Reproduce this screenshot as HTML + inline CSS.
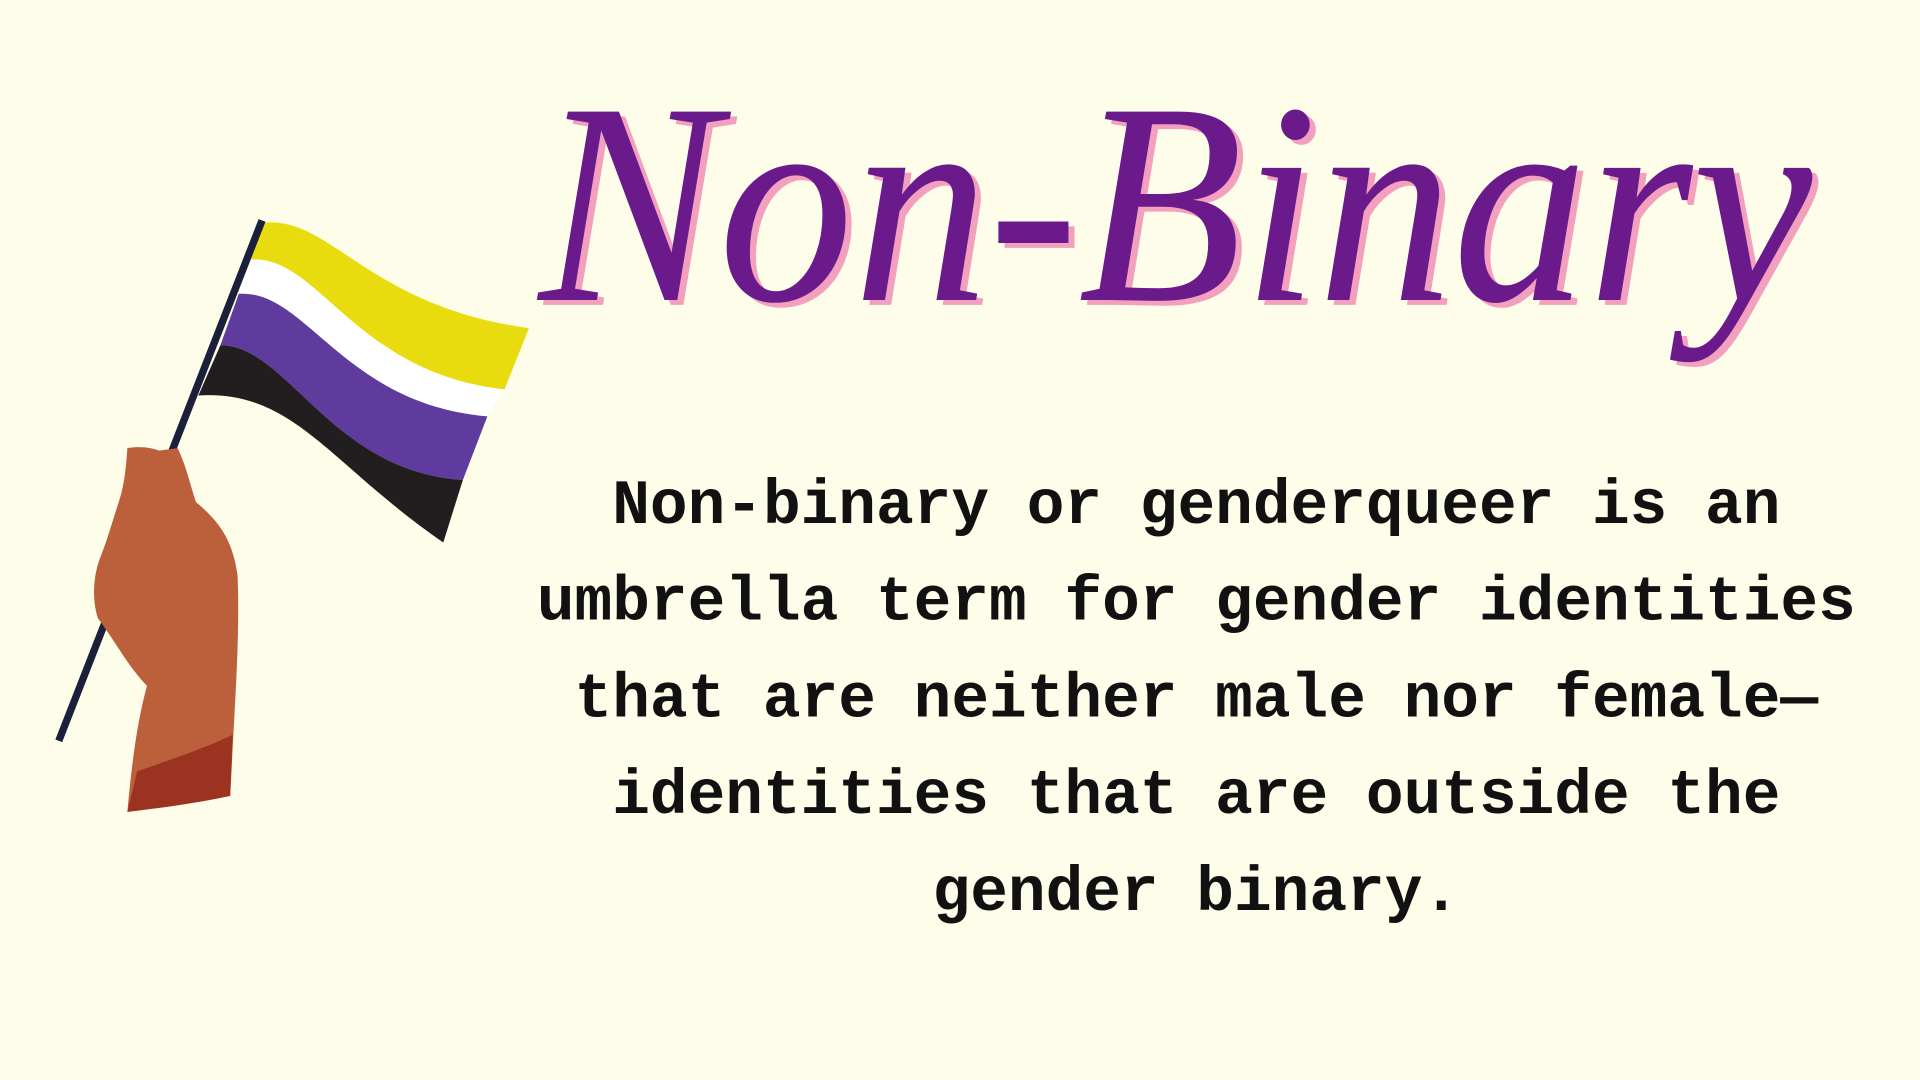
<!DOCTYPE html>
<html><head><meta charset="utf-8"><style>
html,body{margin:0;padding:0;background:#fdfde9;width:1920px;height:1080px;overflow:hidden}
svg{display:block}
</style></head><body>
<svg width="1920" height="1080" viewBox="0 0 1568 882" xmlns="http://www.w3.org/2000/svg">
<rect width="1568" height="882" fill="#fdfde9"/>
<path d="M215,182 C270,176 300,250 432,268 L412,318 C290,305 260,208 205,212 Z" fill="#e9dc0e"/>
<path d="M205,212 C260,208 290,305 412,318 L398,340 C280,330 250,236 195,240 Z" fill="#ffffff"/>
<path d="M195,240 C250,236 280,330 398,340 L378,392 C270,385 235,282 180,282 Z" fill="#5e3b9c"/>
<path d="M180,282 C235,282 270,385 378,392 L362,443 C270,380 240,318 162,323 Z" fill="#221e1f"/>
<line x1="214" y1="180" x2="48" y2="605" stroke="#1a1f3a" stroke-width="6"/>
<path d="M104,366 C115,364 125,366 130,368 L145,366 C152,380 155,395 160,410 C178,425 190,440 194,470 C196,520 192,570 188,650 C160,656 130,660 104,663 C108,620 112,590 120,560 C105,545 95,525 80,505 C75,490 76,470 82,455 C88,440 92,425 97,410 C102,395 103,380 104,366 Z" fill="#bc5f3b"/>
<path d="M112,630 C140,620 170,610 190,600 L188,650 C160,656 130,660 104,663 Z" fill="#9c3320"/>
<g font-family="'Liberation Serif',serif" font-style="italic" font-size="235">
<text x="960" y="245" text-anchor="middle" fill="#f2a0bd" textLength="1040" lengthAdjust="spacingAndGlyphs" transform="translate(5,4)">Non-Binary</text>
<text x="960" y="245" text-anchor="middle" fill="#6b1a8c" textLength="1040" lengthAdjust="spacingAndGlyphs">Non-Binary</text>
</g>
<g font-family="'Liberation Mono',monospace" font-weight="bold" font-size="51.3" fill="#111" text-anchor="middle">
<text x="977" y="427">Non-binary or genderqueer is an</text>
<text x="977" y="506">umbrella term for gender identities</text>
<text x="977" y="585">that are neither male nor female—</text>
<text x="977" y="664">identities that are outside the</text>
<text x="977" y="743">gender binary.</text>
</g>
</svg>
</body></html>
